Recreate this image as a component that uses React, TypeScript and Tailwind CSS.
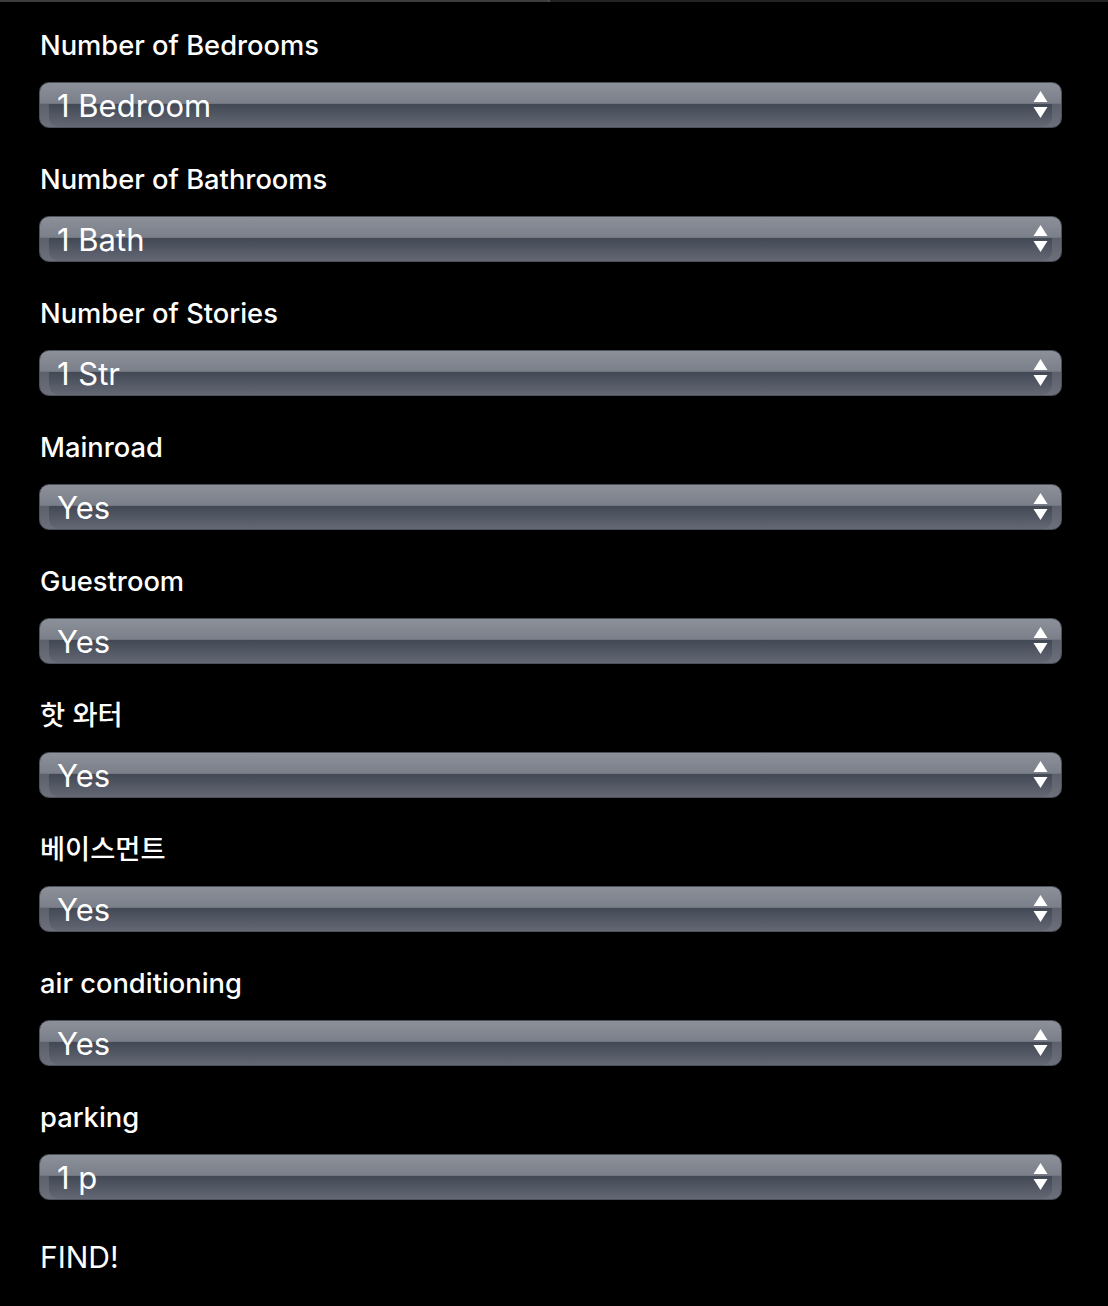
import React from "react"

const fields = [
  { label: "Number of Bedrooms", value: "1 Bedroom" },
  { label: "Number of Bathrooms", value: "1 Bath" },
  { label: "Number of Stories", value: "1 Str" },
  { label: "Mainroad", value: "Yes" },
  { label: "Guestroom", value: "Yes" },
  { label: "핫 와터", value: "Yes" },
  { label: "베이스먼트", value: "Yes" },
  { label: "air conditioning", value: "Yes" },
  { label: "parking", value: "1 p" },
]

function Arrows() {
  return (
    <svg width="15" height="30" viewBox="0 0 15 30" className="shrink-0">
      <polygon points="7.5,1 14.5,12 0.5,12" fill="#ffffff" />
      <polygon points="0.5,17 14.5,17 7.5,28" fill="#ffffff" />
    </svg>
  )
}

function FakeSelect({ value }: { value: string }) {
  return (
    <div className="flex h-[46px] rounded-[10px] border border-[#4c515b] bg-[linear-gradient(to_bottom,#8c9099_0%,#7a7f89_46%,#5b606b_48%,#6b707a_100%)] px-[9px]">
      <div className="flex flex-1 items-center justify-between rounded-b-[10px] bg-[linear-gradient(to_bottom,transparent_0%,transparent_47%,#434855_48%,#636874_100%)] pl-[8px] pr-[4px]">
        <span className="text-[31px] leading-none text-white">{value}</span>
        <Arrows />
      </div>
    </div>
  )
}

export default function App() {
  return (
    <main
      className="min-h-screen bg-black text-white"
      style={{ fontFamily: "Inter, 'Noto Sans CJK KR', sans-serif" }}
    >
      <div className="flex h-[2px]">
        <div className="w-[548px] bg-[#3d3d3d]" />
        <div className="w-[2px] bg-[#4a4a4a]" />
        <div className="flex-1 bg-[#242424]" />
      </div>

      <div className="pl-[39px] pr-[46px] pb-[30px] pt-[28px]">
        {fields.map((f) => (
          <div key={f.label} className="mb-[36px]">
            <div className="mb-[20px] pl-[1px] text-[27.3px] font-medium leading-[32px]">
              {f.label}
            </div>
            <FakeSelect value={f.value} />
          </div>
        ))}

        <div className="pl-[1px] pt-[3px] text-[30px] leading-[36px]">
          FIND!
        </div>
      </div>
    </main>
  )
}
